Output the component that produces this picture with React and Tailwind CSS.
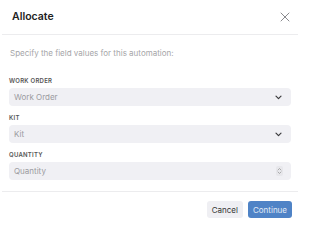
import React from "react";

const font = { fontFamily: "Inter, 'Noto Sans', sans-serif" };

function Chevron() {
  return (
    <svg width="7" height="5" viewBox="0 0 7 5" fill="none" className="shrink-0">
      <path d="M1 1.2l2.5 2.5L6 1.2" stroke="#3a3a3c" strokeWidth="1.2" strokeLinecap="round" strokeLinejoin="round" />
    </svg>
  );
}

function Field({ label, placeholder, kind }) {
  return (
    <div className="flex flex-col">
      <div className="h-[12px] flex items-center text-[6px] font-semibold tracking-[0.25px] text-[#555]">{label}</div>
      <div className="mt-[2px] h-[18px] rounded-[4px] bg-[#f0f0f4] flex items-center justify-between pl-[5px] pr-[9px]">
        <span className="text-[8px] text-[#9b9b9f]">{placeholder}</span>
        {kind === "select" ? (
          <Chevron />
        ) : (
          <div className="w-[7px] h-[10px] mr-[-1px] rounded-[2px] bg-[#e7e7eb] flex items-center justify-center">
            <svg width="5" height="8" viewBox="0 0 5 8" fill="none">
              <path d="M1 3l1.5-1.5L4 3M1 5l1.5 1.5L4 5" stroke="#999" strokeWidth="0.8" strokeLinecap="round" strokeLinejoin="round" />
            </svg>
          </div>
        )}
      </div>
    </div>
  );
}

export default function App() {
  return (
    <div className="w-[300px] h-[227px] bg-white flex flex-col overflow-hidden" style={font}>
      <div className="h-[35px] shrink-0 flex items-center justify-between pl-[10px] pr-[8px] border-b border-[#ececee] mx-[2px]">
        <span className="text-[10.5px] font-semibold text-[#222]">Allocate</span>
        <svg width="10" height="10" viewBox="0 0 10 10" fill="none">
          <path d="M1 1l8 8M9 1l-8 8" stroke="#8a8a8e" strokeWidth="1" strokeLinecap="round" />
        </svg>
      </div>
      <div className="px-[9px] pt-[12px]">
        <div className="pl-[1px] text-[8px] text-[#a5a5a8] h-[12px] flex items-center">Specify the field values for this automation:</div>
        <div className="mt-[15px] flex flex-col gap-[5px]">
          <Field label="WORK ORDER" placeholder="Work Order" kind="select" />
          <Field label="KIT" placeholder="Kit" kind="select" />
          <Field label="QUANTITY" placeholder="Quantity" kind="number" />
        </div>
      </div>
      <div className="mt-[11px] mx-[2px] border-t border-[#ececee]" />
      <div className="flex justify-end gap-[5px] pr-[8px] pt-[9px]">
        <button className="h-[17px] px-[5px] rounded-[3px] bg-[#efeff3] text-[8px] text-[#333]">Cancel</button>
        <button className="h-[17px] px-[5px] rounded-[3px] bg-[#4f83c6] text-[8px] text-[#e3ebf7]">Continue</button>
      </div>
    </div>
  );
}
